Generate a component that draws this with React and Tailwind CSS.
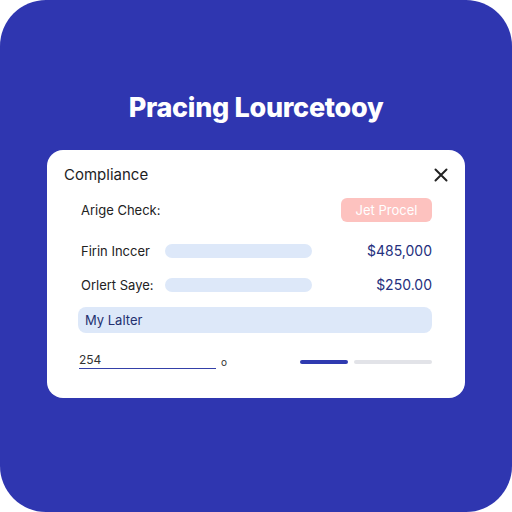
import React from 'react';

// Progress segments under the form
const steps = [
  { w: 'w-[48px]', color: 'bg-[#2f3ab0]' },
  { w: 'w-[78px]', color: 'bg-[#e2e3e8]' },
];

function AmountRow({ label, amount }) {
  return (
    <div className="flex items-center h-[14px]">
      <div className="w-[84px] text-[13px] text-[#222] leading-none">{label}</div>
      <div className="w-[147px] h-[14px] rounded-full bg-[#dde8f9]" />
      <div className="flex-1 text-right text-[14px] text-[#25307e] leading-none">{amount}</div>
    </div>
  );
}

export default function App() {
  return (
    <div className="w-[512px] h-[512px] bg-white" style={{ fontFamily: 'Inter, "Liberation Sans", sans-serif' }}>
      <div className="w-full h-full rounded-[46px] bg-[#2f36b0] flex flex-col items-center">
        <h1 className="mt-[94px] text-[27px] font-extrabold text-white leading-none tracking-[-0.3px]">
          Pracing Lourcetooy
        </h1>

        <div className="mt-[29px] w-[418px] h-[248px] bg-white rounded-[16px] pl-[17px] pr-[33px] pt-[17px]">
          <div className="flex items-center justify-between">
            <span className="text-[15px] text-[#1d1d1f] leading-none">Compliance</span>
            <svg width="14" height="14" viewBox="0 0 14 14" className="mr-[-16px]">
              <path d="M1.5 1.5 12.5 12.5M12.5 1.5 1.5 12.5" stroke="#222" strokeWidth="2" strokeLinecap="round" />
            </svg>
          </div>

          <div className="pl-[17px] mt-[16px] flex items-center justify-between">
            <span className="text-[13px] text-[#222] leading-none">Arige Check:</span>
            <div className="w-[91px] h-[24px] rounded-[6px] bg-[#fdc2bf] flex items-center justify-center text-[13px] text-white leading-none">
              Jet Procel
            </div>
          </div>

          <div className="pl-[17px] mt-[22px] flex flex-col gap-[20px]">
            <AmountRow label="Firin Inccer" amount="$485,000" />
            <AmountRow label="Orlert Saye:" amount="$250.00" />
          </div>

          <div className="ml-[14px] mt-[15px] h-[26px] rounded-[8px] bg-[#dde8f9] flex items-center pl-[7px] text-[13px] text-[#233070] leading-none">
            My Lalter
          </div>

          <div className="ml-[15px] mt-[21px] flex items-center">
            <div className="w-[137px] border-b border-[#3440a8] text-[12px] text-[#333] leading-[12px] pb-[2px]">254</div>
            <span className="ml-[5px] text-[10px] text-[#333] leading-none">o</span>
            <div className="ml-auto flex gap-[6px]">
              {steps.map((s, i) => (
                <div key={i} className={`${s.w} h-[4px] rounded-full ${s.color}`} />
              ))}
            </div>
          </div>
        </div>
      </div>
    </div>
  );
}
